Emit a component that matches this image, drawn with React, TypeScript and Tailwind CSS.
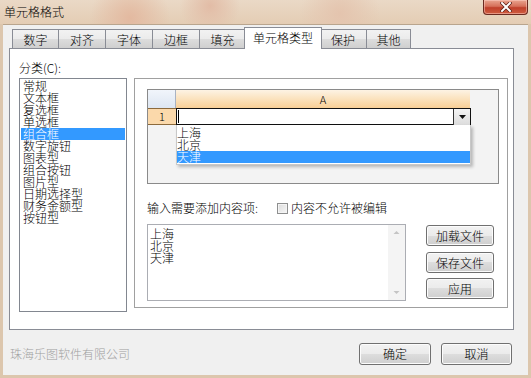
import React from "react";

const F = "font-['Noto_Sans_CJK_SC','Noto_Sans_CJK_SC',sans-serif] font-light";

const BTN =
  "flex items-center justify-center rounded-[3px] border border-[#707070] bg-[linear-gradient(to_bottom,#f2f2f2_0%,#ebebeb_50%,#dddddd_50%,#cfcfcf_100%)] text-[12px] leading-none text-black shadow-[inset_0_0_0_1px_#fcfcfc]";

function Tab({ label, w, sel }: { label: string; w: number; sel?: boolean }) {
  if (sel) {
    return (
      <div
        className="relative z-10 -mb-px -ml-[2px] -mr-[2px] flex h-[22px] items-start justify-center border border-b-0 border-[#898c95] bg-white pt-[3px] text-[12px] leading-[14px] text-black"
        style={{ width: w }}
      >
        {label}
      </div>
    );
  }
  return (
    <div
      className="-ml-px flex h-[19px] items-start justify-center border border-b-0 border-[#898c95] bg-[linear-gradient(to_bottom,#f2f2f2_0%,#ebebeb_50%,#dddddd_50%,#cfcfcf_100%)] pt-[3px] text-[12px] leading-[14px] text-black first:ml-0"
      style={{ width: w }}
    >
      {label}
    </div>
  );
}

export default function App() {
  const cats = [
    "常规",
    "文本框",
    "复选框",
    "单选框",
    "组合框",
    "数字旋钮",
    "图表型",
    "组合按钮",
    "图片型",
    "日期选择型",
    "财务金额型",
    "按钮型",
  ];
  return (
    <div
      className={`${F} flex h-[378px] w-[531px] flex-col overflow-hidden bg-[#dcc6ad] text-black`}
    >
      {/* title bar */}
      <div className="flex h-[24px] shrink-0 items-start justify-between bg-[radial-gradient(circle_at_130px_18px,#e3b9a0_0,transparent_40px),radial-gradient(circle_at_210px_6px,#e2bca6_0,transparent_30px),radial-gradient(circle_at_340px_14px,#e4c4ae_0,transparent_40px),linear-gradient(to_bottom,#ead9c6,#e4cdb4)]">
        <div className="pl-[4px] pt-[5px] text-[12px] leading-[14px] text-black">单元格格式</div>
        <div className="mr-[3px] flex h-[15px] w-[45px] items-center justify-center rounded-b-[4px] border border-t-0 border-[#6b2a20] bg-[linear-gradient(to_bottom,#e9a590_0%,#d6705a_45%,#c0402b_55%,#cf5d40_100%)] shadow-[inset_0_0_0_1px_rgba(255,210,200,0.5)]">
          <svg width="12" height="10" viewBox="0 0 12 10">
            <path d="M2 1 L10 9 M10 1 L2 9" stroke="#5a1d14" strokeWidth="3.4" strokeLinecap="square" />
            <path d="M2 1 L10 9 M10 1 L2 9" stroke="#ffffff" strokeWidth="2" strokeLinecap="square" />
          </svg>
        </div>
      </div>

      {/* client */}
      <div className="ml-[3px] flex h-[351px] w-[525px] flex-col border-t border-[#b9a58e] bg-[#f0f0f0]">
        {/* tabs */}
        <div className="flex h-[23px] shrink-0 items-end pl-[9px]">
          <Tab label="数字" w={47} />
          <Tab label="对齐" w={48} />
          <Tab label="字体" w={48} />
          <Tab label="边框" w={48} />
          <Tab label="填充" w={47} />
          <Tab label="单元格类型" w={78} sel />
          <Tab label="保护" w={48} />
          <Tab label="其他" w={45} />
        </div>

        {/* pane */}
        <div className="ml-[6px] h-[282px] w-[505px] shrink-0 border border-[#898c95] bg-white">
          <div className="pl-[9px] pt-[13px] text-[12px] leading-[12px]">分类(C):</div>
          <div className="mt-[4px] flex pl-[9px]">
            {/* list */}
            <div className="h-[234px] w-[108px] border border-[#828790] bg-white p-px">
              {cats.map((c) => (
                <div
                  key={c}
                  className={`h-[12px] pl-[2px] text-[12px] leading-[12px] ${
                    c === "组合框" ? "bg-[#3399ff] text-white" : "text-black"
                  }`}
                >
                  {c}
                </div>
              ))}
            </div>

            {/* right panel */}
            <div className="ml-[7px] h-[230px] w-[374px] border border-[#a0a0a0] bg-white pl-[12px] pt-[10px]">
              {/* grid preview */}
              <div className="relative h-[95px] w-[352px] border border-[#8a8a8a] bg-[#f3f3f3]">
                <div className="flex h-[18px]">
                  <div className="h-[18px] w-[28px] border-r border-[#a9b3c3] bg-[linear-gradient(to_bottom,#f1f5fb,#dde6f2)]" />
                  <div className="flex h-[18px] w-[294px] items-center justify-center bg-[linear-gradient(to_bottom,#fdf3e4_0%,#fbe2bd_50%,#f8cf96_100%)] text-[11px] leading-none">
                    A
                  </div>
                </div>
                <div className="flex h-[17px]">
                  <div className="flex h-[17px] w-[28px] items-center justify-center border-y border-[#8c6a3c] bg-[#fbd9ab] text-[11px] leading-none">
                    1
                  </div>
                  <div className="relative flex h-[17px] w-[295px] items-center border border-[#111] bg-white">
                    <div className="ml-[1px] h-[13px] w-px bg-black" />
                    <div className="absolute right-0 top-0 flex h-[16px] w-[17px] items-center justify-center border-l border-[#333] bg-[linear-gradient(to_bottom,#f4f4f4,#dcdcdc)]">
                      <svg width="7" height="4" viewBox="0 0 7 4">
                        <path d="M0 0 H7 L3.5 4 Z" fill="#111" />
                      </svg>
                    </div>
                  </div>
                </div>
                {/* dropdown list */}
                <div className="absolute left-[28px] top-[35px] h-[40px] w-[295px] border border-t-0 border-[#c8c8c8] bg-white pt-[2px] shadow-[2px_2px_3px_rgba(0,0,0,0.25)]">
                  <div className="h-[12px] text-[12px] leading-[12px]">上海</div>
                  <div className="h-[12px] text-[12px] leading-[12px]">北京</div>
                  <div className="h-[12px] bg-[#3399ff] text-[12px] leading-[12px] text-white">天津</div>
                </div>
              </div>

              <div className="mt-[18px] flex items-center text-[12px] leading-[12px]">
                <span>输入需要添加内容项:</span>
                <div className="ml-[19px] h-[11px] w-[11px] border border-[#8e8f8f] bg-[linear-gradient(135deg,#dcdcdc,#f6f6f6)] shadow-[inset_0_0_0_1px_#f4f4f4]" />
                <span className="ml-[3px]">内容不允许被编辑</span>
              </div>

              <div className="mt-[10px] flex">
                {/* textarea */}
                <div className="flex h-[77px] w-[259px] border border-[#abadb3] bg-white">
                  <div className="flex-1 pl-[2px] pt-[3px]">
                    <div className="h-[12px] text-[12px] leading-[12px]">上海</div>
                    <div className="h-[12px] text-[12px] leading-[12px]">北京</div>
                    <div className="h-[12px] text-[12px] leading-[12px]">天津</div>
                  </div>
                  <div className="flex w-[17px] flex-col justify-between bg-[#f4f4f4] py-[5px]">
                    <svg width="17" height="4" viewBox="0 0 17 4">
                      <path d="M5.5 4 L8.5 1 L11.5 4 Z" fill="#c4c4c4" />
                    </svg>
                    <svg width="17" height="4" viewBox="0 0 17 4">
                      <path d="M5.5 0 L8.5 3 L11.5 0 Z" fill="#c4c4c4" />
                    </svg>
                  </div>
                </div>
                {/* buttons */}
                <div className="ml-[20px] flex flex-col pt-[1px]">
                  <div className={`${BTN} h-[21px] w-[68px]`}>加载文件</div>
                  <div className={`${BTN} mt-[6px] h-[21px] w-[68px]`}>保存文件</div>
                  <div className={`${BTN} mt-[5px] h-[21px] w-[68px]`}>应用</div>
                </div>
              </div>
            </div>
          </div>
        </div>

        {/* footer */}
        <div className="flex items-center pl-[7px] pr-[16px] pt-[13px]">
          <div className="text-[12px] leading-[12px] text-[#a0a0a0]">珠海乐图软件有限公司</div>
          <div className="ml-auto flex">
            <div className={`${BTN} h-[22px] w-[72px]`}>确定</div>
            <div className={`${BTN} ml-[10px] h-[22px] w-[71px]`}>取消</div>
          </div>
        </div>
      </div>
    </div>
  );
}
